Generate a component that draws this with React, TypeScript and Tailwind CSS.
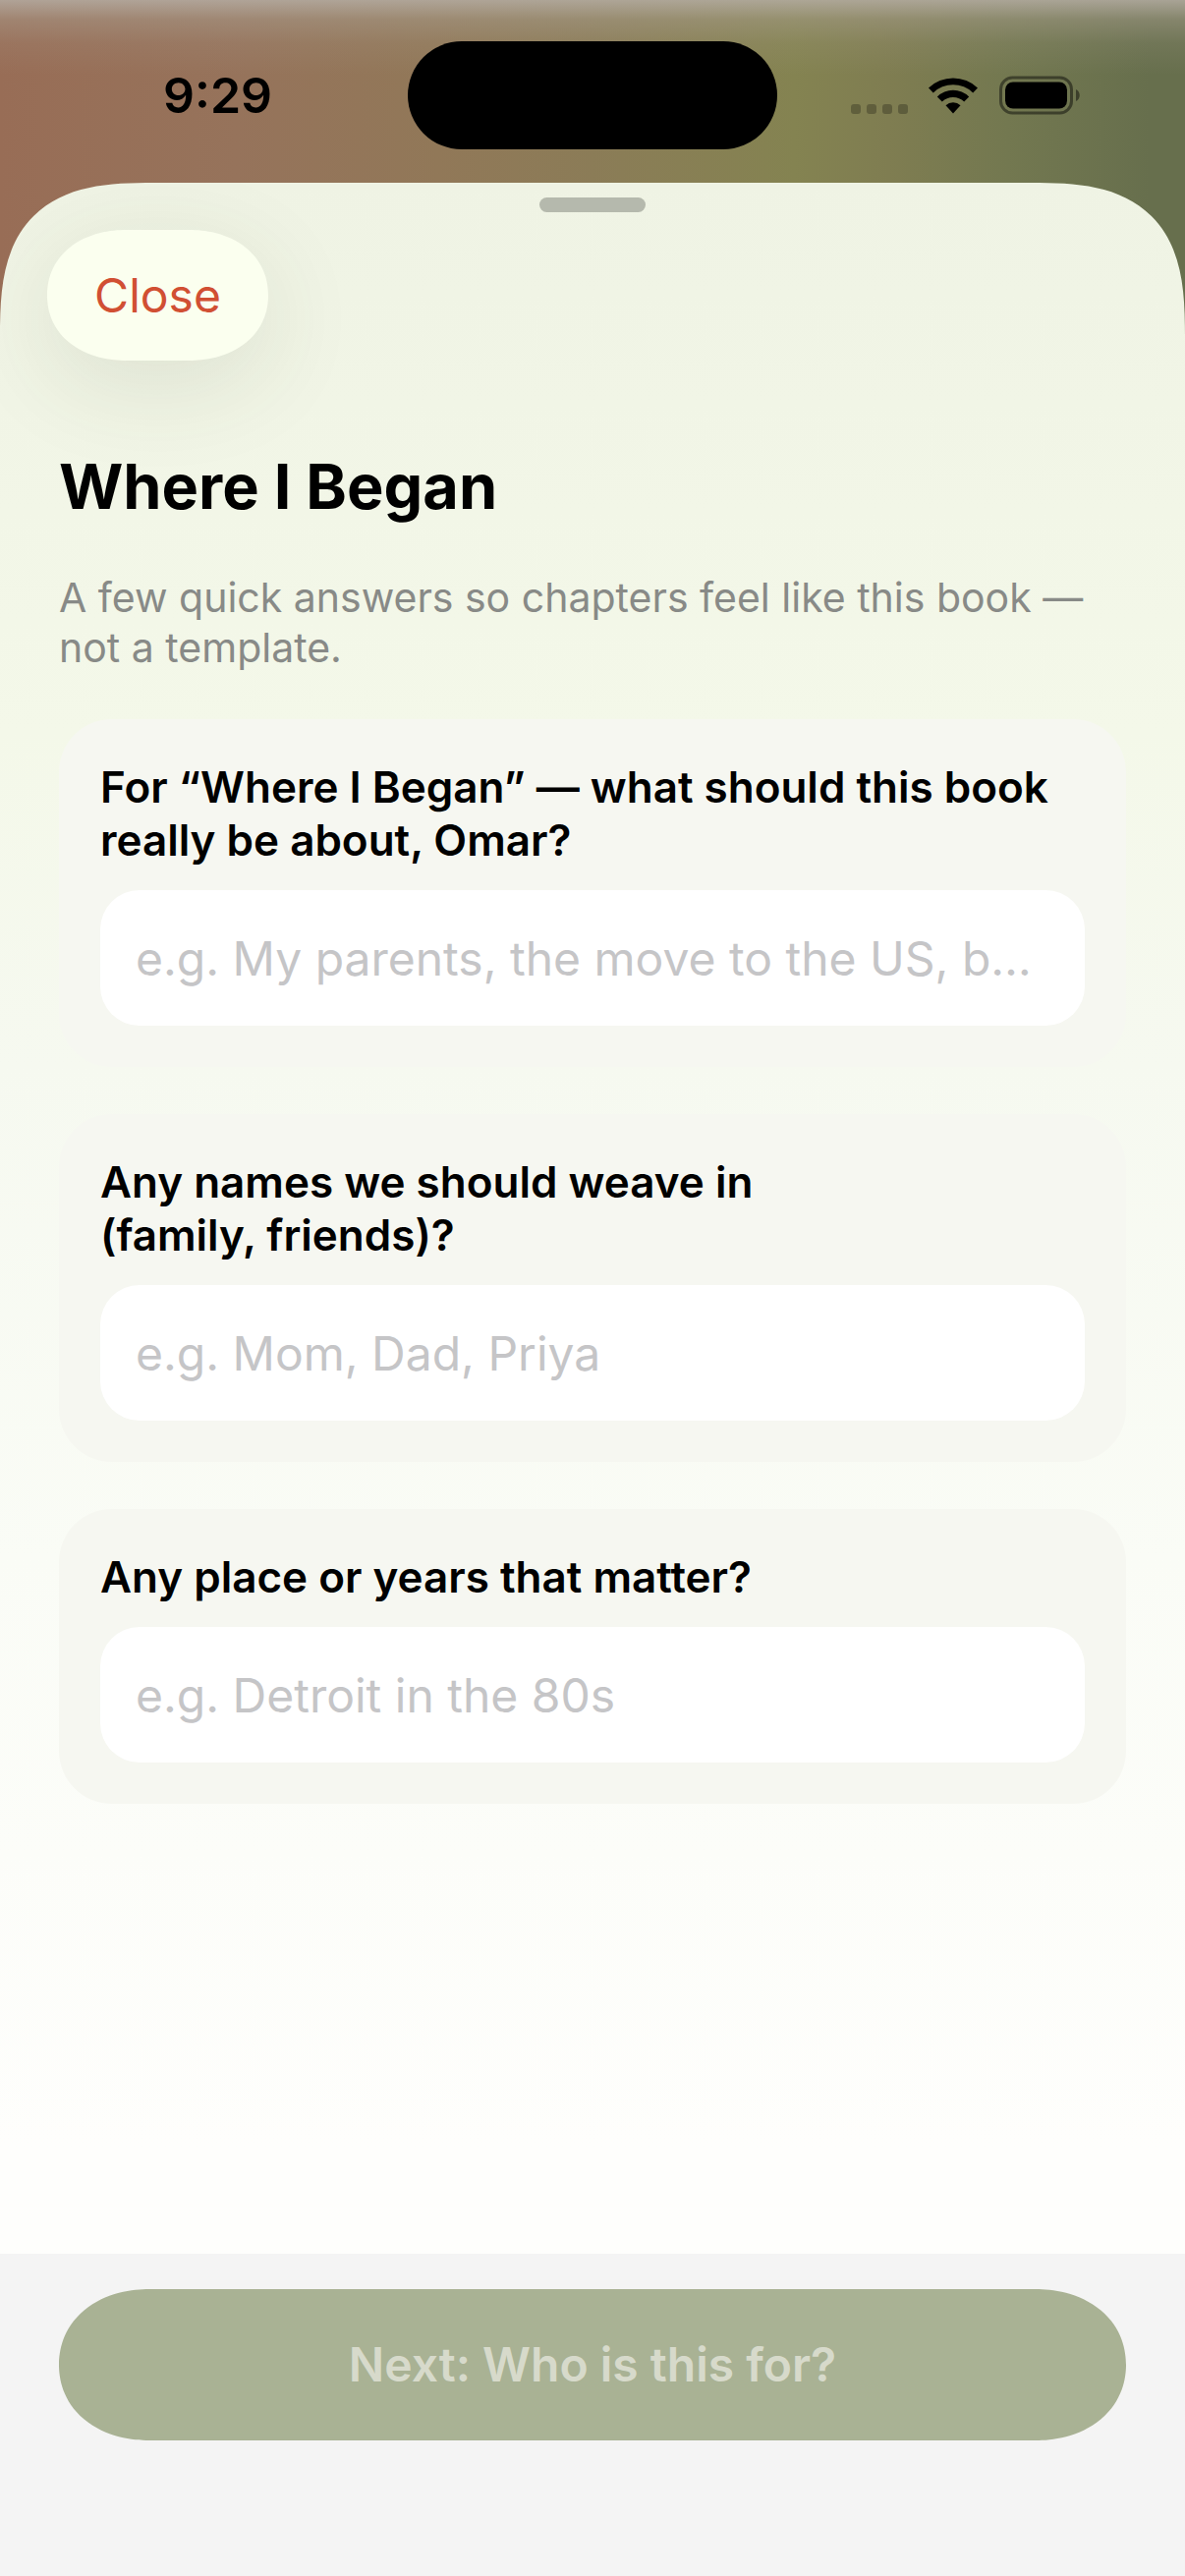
import React, { useState } from 'react';

interface Question {
  id: string;
  label: string;
  placeholder: string;
}

const questions: Question[] = [
  {
    id: 'about',
    label: 'For “Where I Began” — what should this book really be about, Omar?',
    placeholder: 'e.g. My parents, the move to the US, b…',
  },
  {
    id: 'names',
    label: 'Any names we should weave in\n(family, friends)?',
    placeholder: 'e.g. Mom, Dad, Priya',
  },
  {
    id: 'places',
    label: 'Any place or years that matter?',
    placeholder: 'e.g. Detroit in the 80s',
  },
];

const WifiIcon: React.FC = () => (
  <svg width="52" height="38" viewBox="0 0 52 38" aria-hidden="true">
    <path d="M1 11.5A36 36 0 0 1 51 11.5L46.2 16.4A29 29 0 0 0 5.8 16.4Z" />
    <path d="M9.8 20.4A23 23 0 0 1 42.2 20.4L37.2 25.5A16 16 0 0 0 14.8 25.5Z" />
    <path d="M18.5 29.3A10.8 10.8 0 0 1 33.5 29.3L26 37.5Z" />
  </svg>
);

const BatteryIcon: React.FC = () => (
  <svg width="84" height="40" viewBox="0 0 84 40" aria-hidden="true">
    <rect x="2.5" y="2" width="72" height="36" rx="12" fill="none" stroke="#000" strokeOpacity="0.45" strokeWidth="3" />
    <rect x="7" y="6.5" width="63" height="27" rx="8" />
    <path d="M79 14C84 16 84 24 79 26Z" fillOpacity="0.45" />
  </svg>
);

const StatusBar: React.FC = () => (
  <header className="grid h-[186px] grid-cols-[1fr_376px_1fr] items-start pt-[42px]">
    <div className="flex h-[110px] items-center justify-center pl-7 text-[50px] leading-none font-semibold">
      9:29
    </div>
    <div className="h-[110px] rounded-full bg-black" />
    <div className="flex h-[110px] items-center justify-center gap-5 pr-8">
      <div className="flex gap-[6px] pt-[28px]">
        <span className="size-[10px] rounded-[3px] bg-black/25" />
        <span className="size-[10px] rounded-[3px] bg-black/25" />
        <span className="size-[10px] rounded-[3px] bg-black/25" />
        <span className="size-[10px] rounded-[3px] bg-black/25" />
      </div>
      <WifiIcon />
      <BatteryIcon />
    </div>
  </header>
);

interface QuestionCardProps {
  question: Question;
  value: string;
  onChange: (value: string) => void;
}

const QuestionCard: React.FC<QuestionCardProps> = ({ question, value, onChange }) => (
  <div className="flex flex-col gap-6 rounded-[54px] bg-[#f6f7f1] p-[42px]">
    <label htmlFor={question.id} className="text-[44px] leading-[54px] font-semibold whitespace-pre-line">
      {question.label}
    </label>
    <input
      id={question.id}
      type="text"
      value={value}
      onChange={(e) => onChange(e.target.value)}
      placeholder={question.placeholder}
      className="h-[138px] w-full rounded-[40px] bg-white px-9 text-[48px] text-ellipsis outline-none placeholder:text-[#c5c5c7]"
    />
  </div>
);

export default function App() {
  const [answers, setAnswers] = useState<Record<string, string>>({});

  const canContinue = questions.some((q) => (answers[q.id] ?? '').trim() !== '');

  return (
    <div className="flex min-h-screen flex-col bg-[linear-gradient(to_bottom,rgba(180,172,162,0.85)_0px,rgba(170,160,145,0.45)_20px,rgba(170,160,145,0.15)_44px,transparent_76px),linear-gradient(to_right,#986d56_0%,#96735b_20%,#917858_37%,#8b7c57_50%,#848351_67%,#7f7d51_75%,#737850_85%,#676f4d_97%)] font-['Inter','Liberation_Sans',sans-serif] text-black">
      <StatusBar />
      <div className="flex flex-1 flex-col overflow-hidden rounded-t-[157px] bg-[linear-gradient(to_bottom,#eff3e4_0px,#f4f8e9_560px,#f6f9f0_900px,#fafcf6_1400px,#fefefc_2000px)] [corner-shape:superellipse(1.5)]">
        <div className="mx-auto mt-[15px] h-[15px] w-[108px] rounded-full bg-[#b5b9ad]" />
        <div className="px-12 pt-[18px]">
          <button
            type="button"
            className="h-[133px] w-[225px] rounded-[80px/66px] bg-[#fbffef] text-[48px] text-[#d14f33] shadow-[0_24px_100px_rgba(60,70,40,0.11)] [corner-shape:superellipse(1.08)]"
          >
            Close
          </button>
        </div>
        <main className="flex flex-1 flex-col px-15 pt-22">
          <h1 className="text-[63px] leading-20 font-bold">Where I Began</h1>
          <p className="mt-12 text-[41px] leading-[51px] text-[#888a87]">
            A few quick answers so chapters feel like this book — not a template.
          </p>
          <form className="mt-[47px] flex flex-col gap-12">
            {questions.map((q) => (
              <QuestionCard
                key={q.id}
                question={q}
                value={answers[q.id] ?? ''}
                onChange={(value) => setAnswers({ ...answers, [q.id]: value })}
              />
            ))}
          </form>
        </main>
        <footer className="bg-[#f4f4f4] px-15 pt-9 pb-[138px]">
          <button
            type="button"
            disabled={!canContinue}
            className="h-[154px] w-full rounded-[92px/77px] bg-[#a9b294] text-[48px] font-semibold text-[#d7dacb] [corner-shape:superellipse(1.08)]"
          >
            Next: Who is this for?
          </button>
        </footer>
      </div>
    </div>
  );
}
